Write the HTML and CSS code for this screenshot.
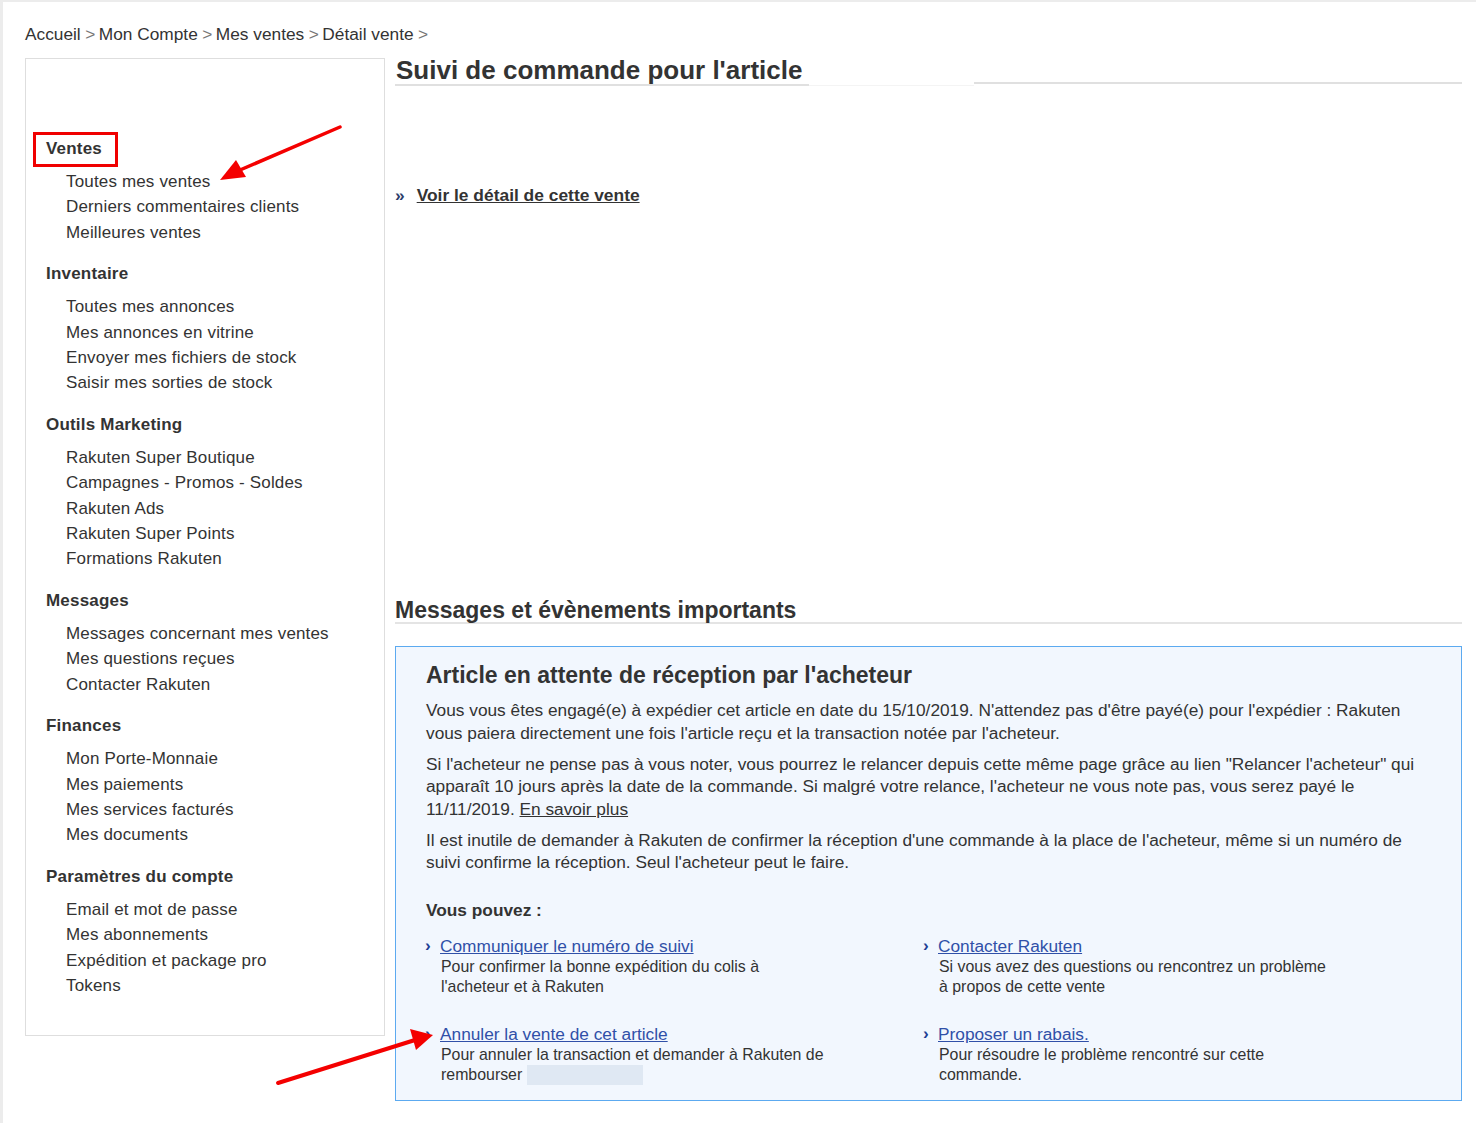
FILE: index.html
```html
<!DOCTYPE html>
<html lang="fr">
<head>
<meta charset="utf-8">
<title>Suivi de commande</title>
<link rel="stylesheet" href="styles.css">
</head>
<body>
<div class="page">
  <nav class="breadcrumb">
    <a href="#">Accueil</a><span class="sep">&gt;</span><a href="#">Mon Compte</a><span class="sep">&gt;</span><a href="#">Mes ventes</a><span class="sep">&gt;</span><a href="#">Détail vente</a><span class="sep">&gt;</span>
  </nav>
  <div class="layout">
    <aside class="sidebar">
      <div class="section">
        <h3 class="sec-title"><span class="marked">Ventes</span></h3>
        <ul>
          <li>Toutes mes ventes</li>
          <li>Derniers commentaires clients</li>
          <li>Meilleures ventes</li>
        </ul>
      </div>
      <div class="section">
        <h3 class="sec-title">Inventaire</h3>
        <ul>
          <li>Toutes mes annonces</li>
          <li>Mes annonces en vitrine</li>
          <li>Envoyer mes fichiers de stock</li>
          <li>Saisir mes sorties de stock</li>
        </ul>
      </div>
      <div class="section">
        <h3 class="sec-title">Outils Marketing</h3>
        <ul>
          <li>Rakuten Super Boutique</li>
          <li>Campagnes - Promos - Soldes</li>
          <li>Rakuten Ads</li>
          <li>Rakuten Super Points</li>
          <li>Formations Rakuten</li>
        </ul>
      </div>
      <div class="section">
        <h3 class="sec-title">Messages</h3>
        <ul>
          <li>Messages concernant mes ventes</li>
          <li>Mes questions reçues</li>
          <li>Contacter Rakuten</li>
        </ul>
      </div>
      <div class="section">
        <h3 class="sec-title">Finances</h3>
        <ul>
          <li>Mon Porte-Monnaie</li>
          <li>Mes paiements</li>
          <li>Mes services facturés</li>
          <li>Mes documents</li>
        </ul>
      </div>
      <div class="section">
        <h3 class="sec-title">Paramètres du compte</h3>
        <ul>
          <li>Email et mot de passe</li>
          <li>Mes abonnements</li>
          <li>Expédition et package pro</li>
          <li>Tokens</li>
        </ul>
      </div>
    </aside>
    <main class="main">
      <div class="title-row">
        <h1 class="page-title">Suivi de commande pour l'article</h1>
        <div class="title-gap"></div>
        <div class="title-rule"></div>
      </div>
      <p class="detail-link"><span class="dbl">»</span><a href="#">Voir le détail de cette vente</a></p>
      <h2 class="sub-title">Messages et évènements importants</h2>
      <section class="notice">
        <h3 class="notice-title">Article en attente de réception par l'acheteur</h3>
        <p>Vous vous êtes engagé(e) à expédier cet article en date du 15/10/2019. N'attendez pas d'être payé(e) pour l'expédier : Rakuten vous paiera directement une fois l'article reçu et la transaction notée par l'acheteur.</p>
        <p><span>Si l'acheteur ne pense pas à vous noter, vous pourrez le relancer depuis cette même page grâce au lien "Relancer l'acheteur" qui apparaît 10 jours après la date de la commande. Si malgré votre relance, l'acheteur ne vous note pas, vous serez payé le</span> <span class="nobr">11/11/2019. <a href="#" class="plain-link">En savoir plus</a></span></p>
        <p>Il est inutile de demander à Rakuten de confirmer la réception d'une commande à la place de l'acheteur, même si un numéro de suivi confirme la réception. Seul l'acheteur peut le faire.</p>
        <p class="can">Vous pouvez :</p>
        <div class="actions">
          <div class="action">
            <a href="#" class="act-link"><span class="chev">›</span>Communiquer le numéro de suivi</a>
            <p class="act-desc">Pour confirmer la bonne expédition du colis à<br>l'acheteur et à Rakuten</p>
          </div>
          <div class="action">
            <a href="#" class="act-link"><span class="chev">›</span>Contacter Rakuten</a>
            <p class="act-desc">Si vous avez des questions ou rencontrez un problème<br>à propos de cette vente</p>
          </div>
          <div class="action">
            <a href="#" class="act-link"><span class="chev">›</span>Annuler la vente de cet article</a>
            <p class="act-desc">Pour annuler la transaction et demander à Rakuten de<br>rembourser <span class="masked"></span></p>
          </div>
          <div class="action">
            <a href="#" class="act-link"><span class="chev">›</span>Proposer un rabais.</a>
            <p class="act-desc">Pour résoudre le problème rencontré sur cette<br>commande.</p>
          </div>
        </div>
      </section>
    </main>
  </div>
  <svg class="annot" width="1476" height="1125" viewBox="0 0 1476 1125" aria-hidden="true">
    <line x1="340" y1="127" x2="240" y2="170" stroke="#f40000" stroke-width="3.5" stroke-linecap="round"/>
    <polygon points="220,180 236,160 246,177" fill="#f40000"/>
    <line x1="278" y1="1083" x2="415" y2="1040" stroke="#f40000" stroke-width="4" stroke-linecap="round"/>
    <polygon points="433,1035 410,1029 416,1050" fill="#f40000"/>
  </svg>
</div>
</body>
</html>
```
FILE: styles.css
```css
html, body {
  margin: 0;
  padding: 0;
  background: #fff;
}
body {
  font-family: "Liberation Sans", Arial, sans-serif;
  color: #333;
  border-top: 2px solid #ececec;
  border-left: 3px solid #ececec;
  min-height: 1123px;
  box-sizing: border-box;
}
.page {
  position: relative;
  padding: 0 14px 0 22px;
}
.breadcrumb {
  font-size: 17.3px;
  height: 56px;
  line-height: 64px;
  color: #333;
  white-space: nowrap;
}
.breadcrumb a {
  color: #333;
  text-decoration: none;
}
.breadcrumb .sep {
  color: #777;
  margin: 0 3.5px 0 4.5px;
}
.layout {
  display: flex;
  gap: 10px;
  align-items: flex-start;
}
.sidebar {
  width: 358px;
  flex: 0 0 358px;
  border: 1px solid #dedede;
  padding: 78px 0 0 0;
  box-sizing: content-box;
  height: 898px;
}
.section {
  margin-bottom: 17px;
}
.sec-title {
  font-size: 17px;
  font-weight: bold;
  margin: 0 0 8px 20px;
  line-height: 24px;
  letter-spacing: 0.2px;
}
.marked {
  position: relative;
  display: inline-block;
}
.marked::after {
  content: "";
  position: absolute;
  left: -13px;
  right: -16px;
  top: -5px;
  bottom: -6px;
  border: 3px solid #f00000;
}
.sidebar ul {
  list-style: none;
  margin: 0;
  padding: 0 0 0 40px;
}
.sidebar li {
  font-size: 17px;
  line-height: 25.4px;
  letter-spacing: 0.16px;
}
.main {
  flex: 1;
  min-width: 0;
}
.title-row {
  display: flex;
  align-items: flex-end;
  margin-top: -2px;
}
.page-title {
  font-size: 26px;
  font-weight: bold;
  margin: 0;
  padding: 0 7px 0 1px;
  line-height: 28px;
  border-bottom: 2px solid #e0e0e0;
}
.title-gap {
  flex: 0 0 165px;
  border-bottom: 1px solid #f4f4f4;
}
.title-rule {
  flex: 1;
  border-bottom: 2px solid #e0e0e0;
  margin-bottom: 2px;
}
.detail-link {
  margin: 97px 0 0 0;
  font-size: 17.4px;
  font-weight: bold;
  line-height: 24px;
}
.detail-link .dbl {
  color: #2d3d6a;
  margin-right: 12px;
}
.detail-link a {
  color: #333;
  text-decoration: underline;
}
.sub-title {
  margin: 391px 0 0 0;
  font-size: 23px;
  font-weight: bold;
  line-height: 24px;
  padding-bottom: 0;
  border-bottom: 2px solid #e4e4e4;
}
.notice {
  margin-top: 22px;
  border: 1px solid #5caaf0;
  background: #f2f7fe;
  padding: 13px 36px 15px 30px;
}
.notice-title {
  margin: 0 0 9px 0;
  font-size: 23px;
  font-weight: bold;
  line-height: 30px;
}
.notice p {
  margin: 0 0 8.5px 0;
  font-size: 17.3px;
  line-height: 22.5px;
}
.nobr {
  white-space: nowrap;
}
.plain-link {
  color: #333;
  text-decoration: underline;
}
.notice p.can {
  margin-top: 25px;
  font-weight: bold;
  margin-bottom: 14px;
}
.actions {
  display: grid;
  grid-template-columns: 498px 1fr;
  row-gap: 26px;
}
.act-link {
  color: #3050a8;
  font-size: 17.3px;
  line-height: 22px;
  text-decoration: underline;
  display: inline-block;
  position: relative;
  margin-left: 14px;
}
.chev {
  position: absolute;
  left: -15px;
  top: -1px;
  font-weight: bold;
  color: #1f3f95;
  text-decoration: none;
  display: inline-block;
}
.notice p.act-desc {
  margin: 0 0 0 15px;
  font-size: 15.9px;
  line-height: 20px;
  white-space: nowrap;
}
.masked {
  display: inline-block;
  width: 116px;
  height: 20px;
  background: #dfe8f3;
  vertical-align: -5px;
}
.annot {
  position: absolute;
  left: -3px;
  top: -2px;
  pointer-events: none;
}
```
